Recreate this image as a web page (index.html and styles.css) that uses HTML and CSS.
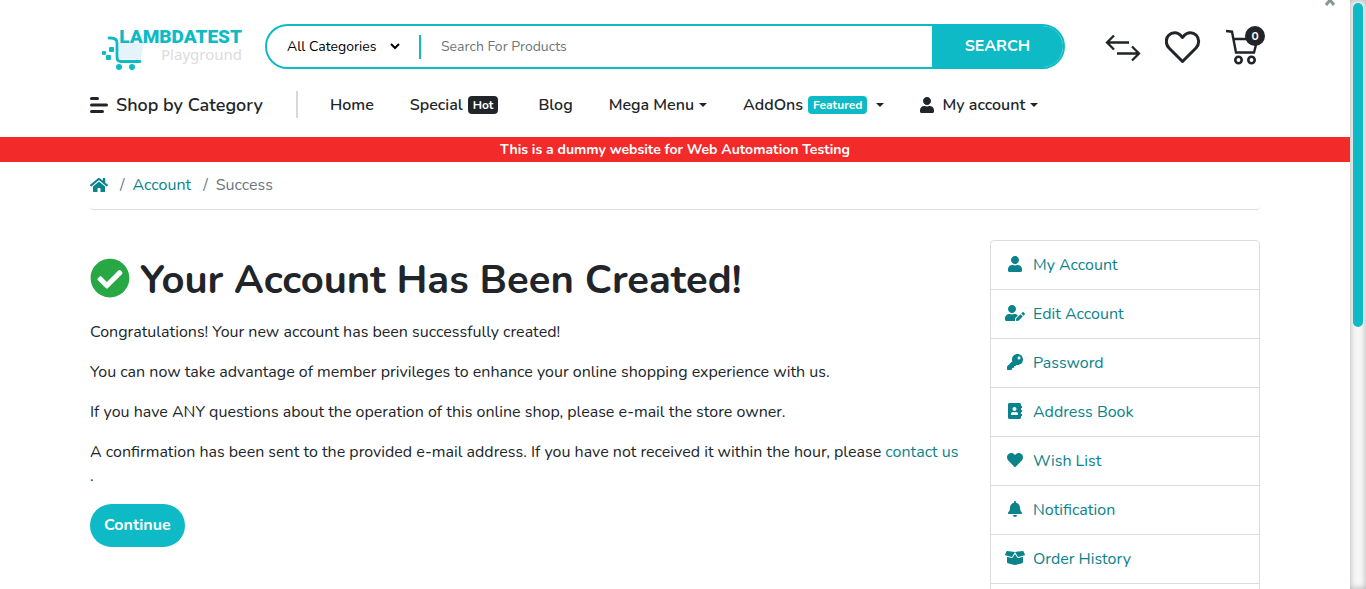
FILE: index.html
```html
<!DOCTYPE html>
<html lang="en">
<head>
<meta charset="utf-8">
<title>Your Account Has Been Created!</title>
<link rel="stylesheet" href="styles.css">
</head>
<body>
<div class="page">
  <header class="container">
    <div class="topbar">
      <a class="logo" href="#" aria-label="Lambdatest Playground">
        <svg class="logo-cart" viewBox="0 0 44 45" aria-hidden="true">
          <path d="M17 19h25l-3 16H16z" fill="#e4f3fc"/>
          <path d="M7 14h2q6 0 6 5v14q0 4.500 4 4.500h19" fill="none" stroke="#0ebac5" stroke-width="2.800" stroke-linecap="round"/>
          <circle cx="17" cy="43" r="3" fill="#0ebac5"/><circle cx="30" cy="43" r="3" fill="#0ebac5"/>
          <g fill="#0ebac5"><rect x="7" y="23" width="5" height="5" rx="1"/><rect x="0" y="27" width="4" height="4" rx="1"/><rect x="4" y="31" width="5" height="5" rx="1"/></g>
        </svg>
        <span class="logo-words"><strong class="logo-name">LAMBDATEST</strong><span class="logo-sub">Playground</span></span>
      </a>
      <form class="search">
        <select class="search-category" aria-label="Category"><option>All Categories</option></select>
        <svg class="chevron" viewBox="0 0 10 8" aria-hidden="true"><path d="M1 2l4 4 4-4" fill="none" stroke="#000" stroke-width="2"/></svg>
        <input class="search-input" type="text" placeholder="Search For Products" aria-label="Search For Products">
        <button class="search-button" type="button">SEARCH</button>
      </form>
      <div class="tools">
        <a href="#" aria-label="Compare"><svg class="tool" viewBox="0 0 36 36" aria-hidden="true"><path d="M24 13.500H2M9 6.500l-7 7 7 7M12 24.500h22M27 17.500l7 7-7 7" fill="none" stroke="#212529" stroke-width="2.300"/></svg></a>
        <a href="#" aria-label="Wish list"><svg class="tool" viewBox="0 0 36 36" aria-hidden="true"><path d="M17.500 32.500L4 19C.5 15.500.5 9.500 3.700 6.300c3.500-3.500 9-3.300 12.100.3l1.700 1.900 1.700-1.900c3.100-3.600 8.600-3.800 12.100-.3 3.200 3.200 3.200 9.200-.3 12.700z" fill="none" stroke="#212529" stroke-width="3" stroke-linejoin="round"/></svg></a>
        <a class="cart" href="#" aria-label="Cart"><svg class="tool" viewBox="0 0 36 36" aria-hidden="true"><g fill="none" stroke="#212529" stroke-width="2.400"><path d="M1 2l6 .7L11 23.500h18L32.500 10H9"/><circle cx="13.500" cy="31" r="3.200" stroke-width="2.600"/><circle cx="26.500" cy="31" r="3.200" stroke-width="2.600"/></g></svg><span class="count">0</span></a>
      </div>
    </div>
    <nav class="nav">
      <a class="shop" href="#"><svg class="menu" viewBox="0 0 18 16" aria-hidden="true"><path d="M1.500 1.500h6M1.500 8h15M1.500 14.500h11" stroke="#212529" stroke-width="3" stroke-linecap="round"/></svg>Shop by Category</a>
      <a href="#">Home</a>
      <a href="#">Special <span class="badge dark">Hot</span></a>
      <a href="#">Blog</a>
      <a class="caret" href="#">Mega Menu</a>
      <a class="caret" href="#">AddOns <span class="badge">Featured</span></a>
      <a class="caret" href="#"><svg class="nav-user" viewBox="0 0 448 512" aria-hidden="true"><path fill="currentColor" d="M224 256c70.700 0 128-57.300 128-128S294.700 0 224 0 96 57.300 96 128s57.300 128 128 128zm89.600 32h-16.700c-22.200 10.200-46.900 16-72.900 16s-50.600-5.800-72.900-16h-16.700C60.200 288 0 348.200 0 422.400V464c0 26.500 21.500 48 48 48h352c26.500 0 48-21.500 48-48v-41.600c0-74.200-60.200-134.400-134.400-134.400z"/></svg>My account</a>
    </nav>
  </header>
  <div class="banner">This is a dummy website for Web Automation Testing</div>
  <main class="container">
    <nav class="breadcrumb" aria-label="Breadcrumb">
      <a href="#" aria-label="Home"><svg class="home" viewBox="0 0 576 512" aria-hidden="true"><path fill="currentColor" d="M280.370 148.260L96 300.110V464a16 16 0 0 0 16 16l112.060-.29a16 16 0 0 0 15.920-16V368a16 16 0 0 1 16-16h64a16 16 0 0 1 16 16v95.640a16 16 0 0 0 16 16.050L464 480a16 16 0 0 0 16-16V300L295.670 148.260a12.190 12.190 0 0 0-15.300 0zM571.600 251.470L488 182.560V44.050a12 12 0 0 0-12-12h-56a12 12 0 0 0-12 12v72.610L318.470 43a48 48 0 0 0-61 0L4.340 251.470a12 12 0 0 0-1.600 16.900l25.500 31A12 12 0 0 0 45.150 301l235.220-193.740a12.190 12.190 0 0 1 15.300 0L530.900 301a12 12 0 0 0 16.900-1.600l25.500-31a12 12 0 0 0-1.700-16.930z"/></svg></a>
      <span class="slash">/</span><a href="#">Account</a><span class="slash">/</span><span>Success</span>
    </nav>
    <div class="columns">
      <section class="content">
        <h1><svg class="check" viewBox="0 0 512 512" aria-hidden="true"><path fill="#28a745" d="M504 256c0 136.967-111.033 248-248 248S8 392.967 8 256 119.033 8 256 8s248 111.033 248 248zM227.314 387.314l184-184c6.248-6.248 6.248-16.379 0-22.627l-22.627-22.627c-6.248-6.249-16.379-6.249-22.628 0L216 308.118l-70.059-70.059c-6.248-6.248-16.379-6.248-22.628 0l-22.627 22.627c-6.248 6.248-6.248 16.379 0 22.627l104 104c6.249 6.249 16.379 6.249 22.628.001z"/></svg>Your Account Has Been Created!</h1>
        <p>Congratulations! Your new account has been successfully created!</p>
        <p>You can now take advantage of member privileges to enhance your online shopping experience with us.</p>
        <p>If you have ANY questions about the operation of this online shop, please e-mail the store owner.</p>
        <p>A confirmation has been sent to the provided e-mail address. If you have not received it within the hour, please <a href="#">contact us</a><br>.</p>
        <a class="continue" href="#">Continue</a>
      </section>
      <aside class="menu-list">
        <a href="#"><svg viewBox="-96 0 640 512" aria-hidden="true"><path d="M224 256c70.700 0 128-57.300 128-128S294.700 0 224 0 96 57.300 96 128s57.300 128 128 128zm89.600 32h-16.700c-22.200 10.200-46.900 16-72.900 16s-50.600-5.800-72.900-16h-16.700C60.200 288 0 348.200 0 422.400V464c0 26.500 21.500 48 48 48h352c26.500 0 48-21.500 48-48v-41.600c0-74.200-60.200-134.400-134.400-134.400z"/></svg>My Account</a>
        <a href="#"><svg viewBox="0 0 640 512" aria-hidden="true"><path d="M224 256c70.700 0 128-57.300 128-128S294.700 0 224 0 96 57.300 96 128s57.300 128 128 128zm89.600 32h-16.700c-22.200 10.200-46.900 16-72.900 16s-50.600-5.800-72.900-16h-16.700C60.200 288 0 348.200 0 422.400V464c0 26.500 21.500 48 48 48h274.900c-2.400-6.800-3.400-14-2.600-21.300l6.800-60.900 1.200-11.100 7.900-7.900 77.300-77.300c-24.500-27.700-60-45.500-99.900-45.500zm45.300 145.300l-6.800 61c-1.100 10.200 7.500 18.800 17.600 17.600l60.900-6.800 137.900-137.900-71.700-71.700-137.900 137.800zM633 268.900L595.100 231c-9.300-9.300-24.500-9.300-33.800 0l-37.800 37.800-4.100 4.100 71.800 71.700 41.800-41.800c9.300-9.400 9.300-24.500 0-33.900z"/></svg>Edit Account</a>
        <a href="#"><svg viewBox="-64 0 640 512" aria-hidden="true"><path d="M512 176.001C512 273.203 433.202 352 336 352c-11.220 0-22.190-1.062-32.827-3.069l-24.012 27.014A23.999 23.999 0 0 1 261.223 384H224v40c0 13.255-10.745 24-24 24h-40v40c0 13.255-10.745 24-24 24H24c-13.255 0-24-10.745-24-24v-78.059c0-6.365 2.529-12.470 7.029-16.971l161.802-161.802C163.108 213.814 160 195.271 160 176 160 78.798 238.797.001 335.999 0 433.488-.001 512 78.511 512 176.001zM336 128c0 26.510 21.490 48 48 48s48-21.490 48-48-21.490-48-48-48-48 21.490-48 48z"/></svg>Password</a>
        <a href="#"><svg viewBox="-96 0 640 512" aria-hidden="true"><path d="M436 160c6.600 0 12-5.400 12-12v-40c0-6.600-5.400-12-12-12h-20V48c0-26.500-21.500-48-48-48H48C21.500 0 0 21.500 0 48v416c0 26.500 21.500 48 48 48h320c26.500 0 48-21.500 48-48v-48h20c6.600 0 12-5.400 12-12v-40c0-6.600-5.400-12-12-12h-20v-64h20c6.600 0 12-5.400 12-12v-40c0-6.600-5.400-12-12-12h-20v-64h20zm-228-32c35.300 0 64 28.700 64 64s-28.700 64-64 64-64-28.700-64-64 28.700-64 64-64zm112 236.800c0 10.600-10 19.200-22.400 19.200H118.400C106 384 96 375.400 96 364.800v-19.200c0-31.800 30.100-57.600 67.200-57.600h5c12.300 5.100 25.700 8 39.800 8s27.600-2.900 39.800-8h5c37.100 0 67.200 25.800 67.200 57.600v19.200z"/></svg>Address Book</a>
        <a href="#"><svg viewBox="-64 0 640 512" aria-hidden="true"><path d="M462.300 62.600C407.500 15.900 326 24.300 275.700 76.200L256 96.500l-19.700-20.300C186.100 24.300 104.500 15.900 49.700 62.600c-62.800 53.600-66.100 149.800-9.900 207.900l193.500 199.800c12.500 12.900 32.800 12.900 45.300 0l193.500-199.800c56.300-58.100 53-154.300-9.800-207.900z"/></svg>Wish List</a>
        <a href="#"><svg viewBox="-96 0 640 512" aria-hidden="true"><path d="M224 512c35.320 0 63.970-28.650 63.970-64H160.030c0 35.350 28.650 64 63.970 64zm215.390-149.710c-19.320-20.760-55.470-51.990-55.470-154.290 0-77.700-54.480-139.900-127.940-155.160V32c0-17.670-14.320-32-31.980-32s-31.980 14.330-31.980 32v20.840C118.560 68.100 64.080 130.300 64.080 208c0 102.300-36.150 133.530-55.470 154.290-6 6.450-8.660 14.160-8.610 21.710.11 16.400 12.980 32 32.100 32h383.800c19.120 0 32-15.600 32.100-32 .05-7.550-2.610-15.270-8.610-21.710z"/></svg>Notification</a>
        <a href="#"><svg viewBox="0 0 640 512" aria-hidden="true"><path d="M425.700 256c-16.900 0-32.800-9-41.400-23.400L320 126l-64.200 106.600c-8.700 14.500-24.600 23.500-41.500 23.500-4.500 0-9-.6-13.300-1.900L64 215v178c0 14.700 10 27.500 24.200 31l216.200 54.100c10.200 2.500 20.900 2.500 31 0L551.800 424c14.200-3.600 24.200-16.400 24.200-31V215l-137 39.100c-4.300 1.300-8.800 1.900-13.300 1.900zm212.600-112.200L586.800 41c-3.100-6.200-9.800-9.800-16.700-8.900L320 64l91.700 152.100c3.800 6.300 11.400 9.300 18.500 7.300l197.900-56.500c9.900-2.900 14.700-13.900 10.200-23.100zM53.200 41L1.700 143.800c-4.600 9.200.3 20.200 10.100 23l197.900 56.500c7.100 2 14.700-1 18.500-7.300L320 64 69.800 32.100c-6.900-.8-13.500 2.700-16.600 8.900z"/></svg>Order History</a>
      </aside>
    </div>
  </main>
  <svg class="corner" viewBox="0 0 12 8" aria-hidden="true"><path d="M2 5l4-5 4 5" fill="none" stroke="#869791" stroke-width="3"/></svg>
</div>
<div class="scrollbar" aria-hidden="true"><div class="thumb"></div></div>
</body>
</html>
```
FILE: styles.css
```css
* { box-sizing: border-box; }
body {
  margin: 0;
  height: 100vh;
  overflow: hidden;
  display: grid;
  grid-template-columns: 1fr 16px;
  font: 400 16px/24px Nunito, "Open Sans", sans-serif;
  color: #212529;
  background: #fff;
}
a { color: #0a838b; text-decoration: none; }
svg { display: block; flex: none; }
.page { position: relative; overflow: hidden; }
.container { max-width: 1200px; margin: 0 auto; padding: 0 15px; }

.topbar { display: flex; align-items: center; padding-top: 24px; }
.logo { display: flex; flex: none; width: 163px; margin-left: 12px; }
.logo-cart { width: 44px; height: 45px; overflow: visible; }
.logo-words { display: flex; flex-direction: column; align-items: flex-end; width: 140px; margin-left: -44px; padding-top: 3px; }
.logo-name { font: 900 19px/19px Roboto, sans-serif; color: #0ebac5; }
.logo-sub { font: 400 15px/16px "Noto Sans", sans-serif; color: #dcdcdc; }
.search {
  position: relative;
  display: flex;
  flex: 1;
  max-width: 800px;
  height: 45px;
  border: 2px solid #0ebac5;
  border-radius: 23px;
  overflow: hidden;
}
.search-category, .search-input {
  border: 0;
  outline: 0;
  background: none;
  font: inherit;
  font-size: 14px;
}
.search-category { width: 152px; padding: 0 0 0 20px; color: #000; appearance: none; }
.chevron { position: absolute; left: 123px; top: 16px; width: 10px; height: 8px; }
.search-input { flex: 1; min-width: 0; padding: 0 22px; background: linear-gradient(#0ebac5, #0ebac5) 0 50% / 2px 24px no-repeat; }
.search-input::placeholder { color: #6c757d; opacity: 1; }
.search-button { width: 131px; padding: 0 0 2px; border: 0; background: #0ebac5; color: #fff; font: inherit; font-weight: 700; }
.tools { display: flex; flex: none; gap: 24px; margin: 0 -2px 0 40px; }
.tool { width: 36px; height: 36px; }
.cart { position: relative; }
.count {
  position: absolute;
  right: -4px;
  top: -3px;
  width: 20px;
  border-radius: 10px;
  background: #212529;
  color: #fff;
  font-size: 12px;
  font-weight: 700;
  line-height: 20px;
  text-align: center;
}

.nav { display: flex; align-items: center; gap: 36px; padding: 22px 0 19px; font-weight: 600; white-space: nowrap; }
.nav a { display: flex; align-items: center; color: #212529; }
.nav .shop { width: 208px; height: 27px; margin-right: -4px; border-right: 2px solid #d9d9d9; font-size: 18px; }
.menu { width: 18px; height: 16px; margin-right: 8px; }
.badge { margin: 0 4px 0 5px; padding: 0 5px; border-radius: 4px; background: #0ebac5; color: #fff; font-size: 12px; font-weight: 700; line-height: 18px; }
.dark { background: #212529; }
.caret::after { content: ""; margin-left: 5px; border: 4px solid transparent; border-top-color: #212529; border-bottom: 0; }
.nav-user { width: 14px; height: 16px; margin-right: 8px; }

.banner { background: #f32a2a; color: #fff; font-size: 14px; font-weight: 700; line-height: 25px; text-align: center; }
.breadcrumb { display: flex; align-items: center; height: 48px; padding-bottom: 2px; border-bottom: 1px solid #dcdcdc; border-radius: 4px; color: #6c757d; }
.home { width: 18px; height: 16px; }
.slash { margin: 0 8px 0 12px; }
.columns { display: flex; padding-top: 30px; }
.content { flex: 1; padding-top: 16px; }
h1 { display: flex; align-items: center; gap: 10px; margin: 0 0 16px; font-size: 40px; font-weight: 700; line-height: 48px; white-space: nowrap; }
.check { width: 40px; height: 40px; margin-bottom: 4px; }
p { margin: 0 0 16px; white-space: nowrap; }
.continue { display: inline-block; padding: 0 14px; border-radius: 22px; background: #0ebac5; color: #fff; font-weight: 700; line-height: 43px; }
.menu-list { flex: none; width: 270px; height: 360px; border: 1px solid #dcdcdc; border-radius: 4px; }
.menu-list a { display: flex; align-items: center; gap: 8px; height: 49px; padding-left: 14px; border-bottom: 1px solid #dcdcdc; }
.menu-list svg { width: 20px; height: 16px; margin-bottom: 2px; fill: currentColor; }
.corner { position: absolute; right: 14px; top: 0; width: 12px; height: 8px; }
.scrollbar { padding: 3px; background: #f7f7f7; box-shadow: inset 0 0 6px rgba(0, 0, 0, .3); }
.thumb { height: 55vh; border-radius: 5px; background: #0ebac5; }
```
